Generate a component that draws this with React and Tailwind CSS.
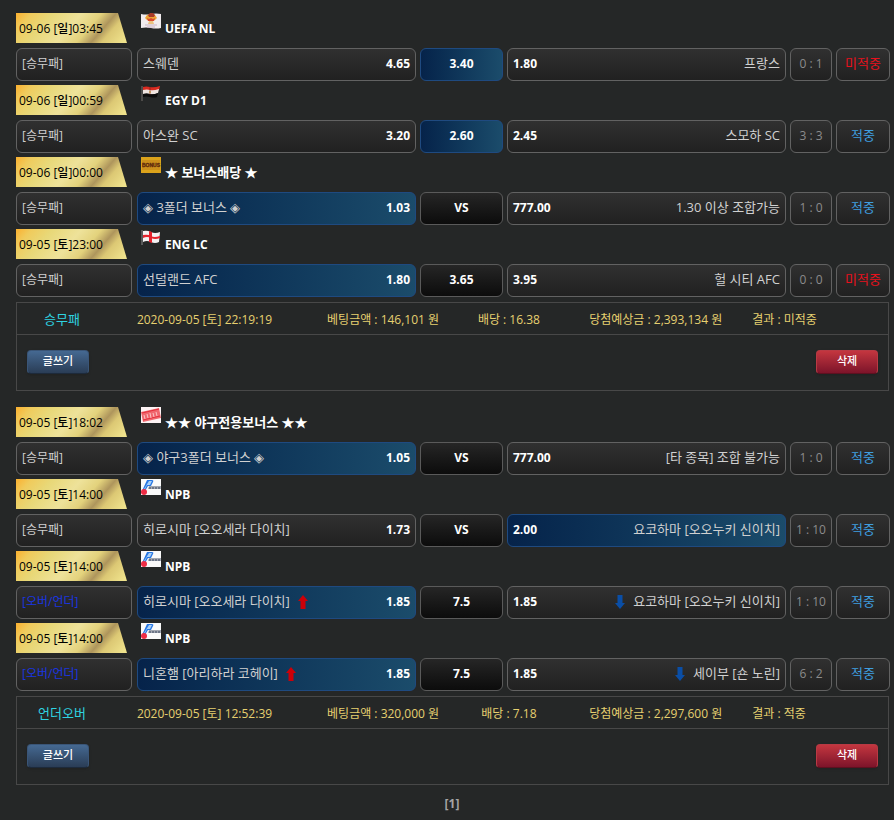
import clsx from 'clsx';

const slips = [
    {
        label: "승무패",
        placedAt: "2020-09-05 [토] 22:19:19",
        stake: "146,101 원",
        odds: "16.38",
        payout: "2,393,134 원",
        result: "미적중",
        games: [
            { time: "09-06 [일]03:45", icon: "uefa", league: "UEFA NL", home: "스웨덴", homeOdds: "4.65", draw: "3.40", awayOdds: "1.80", away: "프랑스", score: "0 : 1", hit: false, pick: "draw" },
            { time: "09-06 [일]00:59", icon: "egypt", league: "EGY D1", home: "아스완 SC", homeOdds: "3.20", draw: "2.60", awayOdds: "2.45", away: "스모하 SC", score: "3 : 3", hit: true, pick: "draw" },
            { time: "09-06 [일]00:00", icon: "bonus", league: "★ 보너스배당 ★", bonus: true, home: "◈ 3폴더 보너스 ◈", homeOdds: "1.03", draw: "VS", awayOdds: "777.00", away: "1.30 이상 조합가능", score: "1 : 0", hit: true, pick: "home" },
            { time: "09-05 [토]23:00", icon: "england", league: "ENG LC", home: "선덜랜드 AFC", homeOdds: "1.80", draw: "3.65", awayOdds: "3.95", away: "헐 시티 AFC", score: "0 : 0", hit: false, pick: "home" },
        ],
    },
    {
        label: "언더오버",
        placedAt: "2020-09-05 [토] 12:52:39",
        stake: "320,000 원",
        odds: "7.18",
        payout: "2,297,600 원",
        result: "적중",
        games: [
            { time: "09-05 [토]18:02", icon: "stamp", league: "★★ 야구전용보너스 ★★", bonus: true, home: "◈ 야구3폴더 보너스 ◈", homeOdds: "1.05", draw: "VS", awayOdds: "777.00", away: "[타 종목] 조합 불가능", score: "1 : 0", hit: true, pick: "home" },
            { time: "09-05 [토]14:00", icon: "npb", league: "NPB", home: "히로시마 [오오세라 다이치]", homeOdds: "1.73", draw: "VS", awayOdds: "2.00", away: "요코하마 [오오누키 신이치]", score: "1 : 10", hit: true, pick: "away" },
            { time: "09-05 [토]14:00", icon: "npb", league: "NPB", home: "히로시마 [오오세라 다이치]", homeOdds: "1.85", draw: "7.5", awayOdds: "1.85", away: "요코하마 [오오누키 신이치]", score: "1 : 10", hit: true, pick: "home", overUnder: true },
            { time: "09-05 [토]14:00", icon: "npb", league: "NPB", home: "니혼햄 [아리하라 코헤이]", homeOdds: "1.85", draw: "7.5", awayOdds: "1.85", away: "세이부 [숀 노린]", score: "6 : 2", hit: true, pick: "home", overUnder: true },
        ],
    },
];

const cell = "flex h-[33px] items-center rounded-md border pb-[2px]";
const plain = "border-[#626262] bg-linear-to-b from-[#303030] to-[#212121]";
const dark = "border-[#5a5a5a] bg-linear-to-b from-[#262626] to-[#0c0c0c]";
const picked = "border-[#1f4a80] bg-linear-to-r from-[#06234a] to-[#1b4c6b]";

const leagueArt = {
    uefa: (
        <>
            <path d="M0 1q5 1 10 0t10 0v14q-5 1-10 0T0 15z" fill="#f1ecee" />
            <path d="M4 5l2-3 4-1 4 1 2 3-2 2-4 1-4-1z" fill="#eda536" />
            <path d="M7 2l2-2h3l2 2-1 2H8z" fill="#a93a28" />
            <path d="M6 5l2 1 2-1 2 1 2-1-1 3H7z" fill="#d9482e" />
            <path d="M8 8h4l1 3H7z" fill="#eac27e" />
            <path d="M4 12h12M6 14h8" stroke="#c9b2c4" />
        </>
    ),
    egypt: (
        <>
            <path d="M1 1v15" stroke="#77706c" />
            <path d="M2 2q3-1 7 0t10-1l-1 4q-5 2-8 1t-8 0z" fill="#d92a20" />
            <path d="M2 5q4-1 7 0t9-1l-1 4q-4 2-8 1t-7 0z" fill="#efe4e0" />
            <path d="M2 9q4-1 7 0t8-1l-1 4q-3 1-7 0t-7 0z" fill="#0b0b0b" />
            <path d="M9 2v8" stroke="#6d1a14" opacity=".6" />
            <circle cx="9" cy="7" r="1" fill="#c39346" />
        </>
    ),
    bonus: (
        <>
            <rect width="20" height="16" fill="#dca31b" />
            <rect x="1" y="3" width="18" height="10" fill="#cc8f1b" />
            <text x="10" y="10" textAnchor="middle" fontFamily="'Liberation Sans', sans-serif" fontWeight="bold" fontSize="5" fill="#5c260c" stroke="#5c260c" strokeWidth=".3">BONUS</text>
        </>
    ),
    england: (
        <>
            <path d="M1 1v15" stroke="#8d8d8d" />
            <path d="M2 2q4-1 8 1t9 0l-1 10q-4 2-8 0t-8 0z" fill="#f4f1f2" />
            <path d="M8 2l3 1v11l-3-1z" fill="#e5232d" />
            <path d="M2 6q5-1 8 1t9 0v2q-5 2-9 0t-8 0z" fill="#e5232d" />
        </>
    ),
    stamp: (
        <>
            <rect width="20" height="16" fill="#fdf3f4" />
            <path d="M0 5L18 1l2 10L2 15z" fill="#f0686f" />
            <path d="M1 6l17-4M2 13l17-4" stroke="#e5303c" />
            <path d="M3 8l1 4M6 7l1 4M9 6l1 5M12 6l1 4M15 5l1 4" stroke="#fbc3c5" />
        </>
    ),
    npb: (
        <>
            <rect width="20" height="16" fill="#fafafa" />
            <path d="M6 1h5q2 0 1 2L10 7H7l-3 5H1z" fill="#2777e4" />
            <path d="M8 2h3L9 6H6L4 10H3z" fill="#a9d0f7" />
            <path d="M8 7h12v3H7z" fill="#a3a8b2" />
            <path d="M8 9h11" stroke="#39455f" strokeDasharray="2 1" />
            <circle cx="3" cy="13" r="3" fill="#ef2c45" />
        </>
    ),
};

function LeagueIcon({ name }) {
    return (
        <svg width="20" height="16" viewBox="0 0 20 16" className="shrink-0 self-start" aria-hidden="true">
            {leagueArt[name]}
        </svg>
    );
}

function Arrow({ down }) {
    return (
        <svg width="10" height="14" viewBox="0 0 10 14" className={clsx("shrink-0", down && "rotate-180")} aria-hidden="true">
            <path d="M5 0l5 6H7.500v8h-5V6H0z" fill={down ? "#0a4ea6" : "#cc0008"} />
        </svg>
    );
}

function TimeTag({ time }) {
    return (
        <div className="relative flex h-[30px] w-[111px] items-center pt-[2px] pl-[3px]">
            <svg className="absolute inset-0" width="111" height="30" viewBox="0 0 111 30" aria-hidden="true">
                <defs>
                    <linearGradient id="gold" gradientUnits="userSpaceOnUse" x1="0" y1="0" x2="75.600" y2="65.500">
                        <stop offset="0" stopColor="#fbb02f" />
                        <stop offset=".12" stopColor="#f0cb5c" />
                        <stop offset=".28" stopColor="#e8d878" />
                        <stop offset=".5" stopColor="#eee29a" />
                        <stop offset=".65" stopColor="#e3d27c" />
                        <stop offset=".76" stopColor="#ae955c" />
                        <stop offset=".84" stopColor="#dcc874" />
                        <stop offset="1" stopColor="#efe28c" />
                    </linearGradient>
                </defs>
                <path d="M0 0h102l9 30H0z" fill="url(#gold)" />
            </svg>
            <span className="relative text-xs font-medium text-black">{time}</span>
        </div>
    );
}

function Game({ game }) {
    return (
        <li className="flex flex-col gap-[5px]">
            <div className="flex gap-[14px]">
                <TimeTag time={game.time} />
                <div className="flex h-[30px] items-center gap-1">
                    <LeagueIcon name={game.icon} />
                    <h2 className={clsx("pt-[2px] font-bold text-white", game.bonus ? "text-[13px]" : "text-xs")}>{game.league}</h2>
                </div>
            </div>
            <div className="grid grid-cols-[117fr_279fr_83fr_279fr_42fr_54fr] gap-1 text-[13px] text-[#d0d0d0]">
                <div className={clsx(cell, plain, "mr-px pl-[5px] text-xs", game.overUnder && "text-[#1a35e0]")}>
                    {game.overUnder ? "[오버/언더]" : "[승무패]"}
                </div>
                <div className={clsx(cell, game.pick === "home" ? picked : plain, "gap-2 px-[5px]")}>
                    <span>{game.home}</span>
                    {game.overUnder && <Arrow />}
                    <b className="ml-auto text-xs text-white">{game.homeOdds}</b>
                </div>
                <div className={clsx(cell, game.pick === "draw" ? picked : dark, "justify-center")}>
                    <b className="text-xs text-white">{game.draw}</b>
                </div>
                <div className={clsx(cell, game.pick === "away" ? picked : plain, "gap-2 px-[5px]")}>
                    <b className="mr-auto text-xs text-white">{game.awayOdds}</b>
                    {game.overUnder && <Arrow down />}
                    <span>{game.away}</span>
                </div>
                <div className={clsx(cell, plain, "justify-center text-xs whitespace-nowrap text-[#8c8c8c]")}>{game.score}</div>
                <div className={clsx(cell, plain, "justify-center", game.hit ? "text-[#3f9fe0]" : "text-[#e8101c]")}>
                    {game.hit ? "적중" : "미적중"}
                </div>
            </div>
        </li>
    );
}

function Slip({ slip }) {
    return (
        <section>
            <ul className="flex flex-col gap-1">
                {slip.games.map((game, i) => (
                    <Game key={i} game={game} />
                ))}
            </ul>
            <div className="mt-[5px] mr-px border border-[#484848]">
                <div className="grid h-8 grid-cols-[90fr_204fr_145fr_107fr_160fr_166fr] items-center border-b border-[#484848] pt-[2px] text-xs whitespace-nowrap text-[#e6d070]">
                    <span className="text-center text-[13px] text-[#2fd3e0]">{slip.label}</span>
                    <span className="pl-[30px]">{slip.placedAt}</span>
                    <span className="text-center">베팅금액 : {slip.stake}</span>
                    <span className="text-center">배당 : {slip.odds}</span>
                    <span className="text-right">당첨예상금 : {slip.payout}</span>
                    <span className="pl-[30px]">결과 : {slip.result}</span>
                </div>
                <div className="flex h-[55px] items-center justify-between px-[10px] pb-[2px] text-[11px] font-medium text-white text-shadow-sm">
                    <button className="h-6 w-[62px] rounded-sm border border-[#3a5577] border-b-[#1d2a3b] bg-linear-to-b from-[#456992] to-[#2a3d56] shadow-sm">
                        글쓰기
                    </button>
                    <button className="h-6 w-[62px] rounded-sm border border-[#b83a44] border-b-[#5e1020] bg-linear-to-b from-[#c4363f] to-[#7d142a] shadow-sm">
                        삭제
                    </button>
                </div>
            </div>
        </section>
    );
}

export default function App() {
    return (
        <main className="flex min-h-screen flex-col gap-4 bg-[#252727] pt-[13px] pr-1 pl-4 font-['Open_Sans','Noto_Sans_CJK_KR',sans-serif]">
            {slips.map((slip) => (
                <Slip key={slip.placedAt} slip={slip} />
            ))}
            <nav className="-mt-[5px] mr-[2px] text-center text-xs font-bold text-[#a5a5a5]">
                <a href="#1">[1]</a>
            </nav>
        </main>
    );
}
